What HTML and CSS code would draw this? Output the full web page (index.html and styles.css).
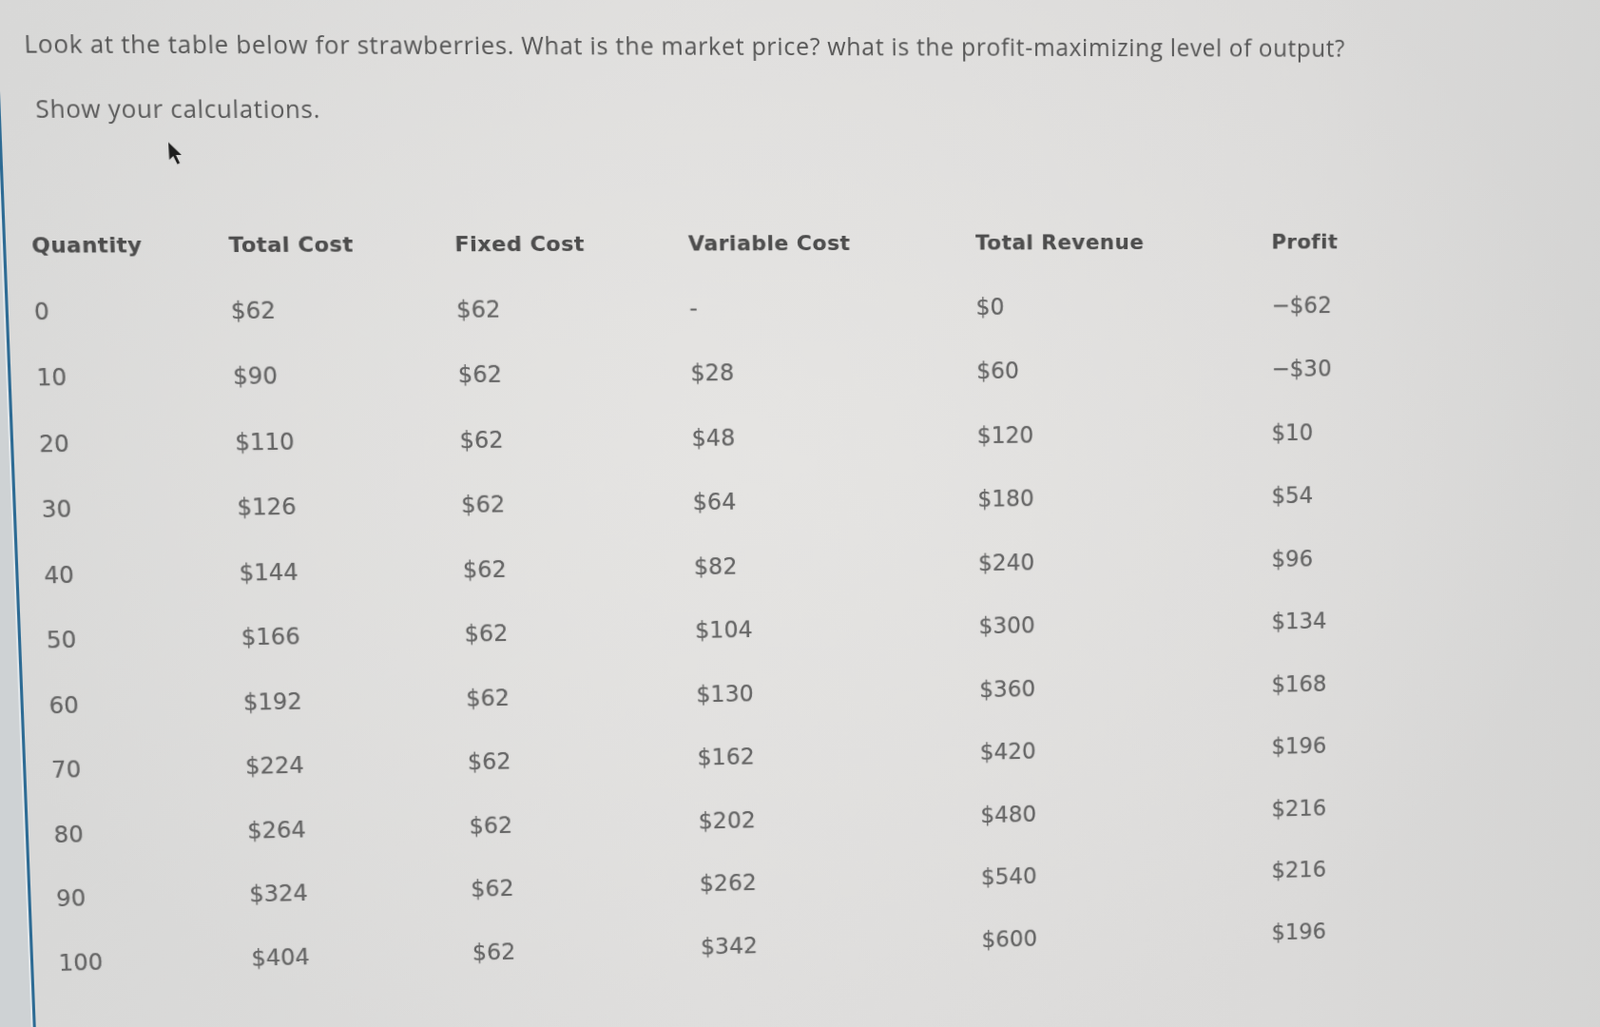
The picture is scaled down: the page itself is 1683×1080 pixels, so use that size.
FILE: index.html
```html
<!DOCTYPE html>
<html lang="en">
<head>
<meta charset="utf-8">
<title>Strawberries – market price</title>
<link rel="stylesheet" href="styles.css">
</head>
<body>
<div class="screen">
  <main class="page">
    <p class="question">Look at the table below for strawberries. What is the market price? what is the profit-maximizing level of output?</p>
    <p class="instruction">Show your calculations.</p>
    <svg class="cursor" width="15" height="26" viewBox="0 0 15 26" aria-hidden="true">
      <path d="M1 1 L1.5 19 L5.5 15 L9.5 23.5 L12 22.3 L8.2 14 L14 14 Z" fill="#1e1e1e"/>
    </svg>
    <div class="table">
      <div class="th">Quantity</div>
      <div class="th">Total Cost</div>
      <div class="th">Fixed Cost</div>
      <div class="th">Variable Cost</div>
      <div class="th">Total Revenue</div>
      <div class="th">Profit</div>

      <div class="td">0</div><div class="td">$62</div><div class="td">$62</div><div class="td">-</div><div class="td">$0</div><div class="td">−$62</div>
      <div class="td">10</div><div class="td">$90</div><div class="td">$62</div><div class="td">$28</div><div class="td">$60</div><div class="td">−$30</div>
      <div class="td">20</div><div class="td">$110</div><div class="td">$62</div><div class="td">$48</div><div class="td">$120</div><div class="td">$10</div>
      <div class="td">30</div><div class="td">$126</div><div class="td">$62</div><div class="td">$64</div><div class="td">$180</div><div class="td">$54</div>
      <div class="td">40</div><div class="td">$144</div><div class="td">$62</div><div class="td">$82</div><div class="td">$240</div><div class="td">$96</div>
      <div class="td">50</div><div class="td">$166</div><div class="td">$62</div><div class="td">$104</div><div class="td">$300</div><div class="td">$134</div>
      <div class="td">60</div><div class="td">$192</div><div class="td">$62</div><div class="td">$130</div><div class="td">$360</div><div class="td">$168</div>
      <div class="td">70</div><div class="td">$224</div><div class="td">$62</div><div class="td">$162</div><div class="td">$420</div><div class="td">$196</div>
      <div class="td">80</div><div class="td">$264</div><div class="td">$62</div><div class="td">$202</div><div class="td">$480</div><div class="td">$216</div>
      <div class="td">90</div><div class="td">$324</div><div class="td">$62</div><div class="td">$262</div><div class="td">$540</div><div class="td">$216</div>
      <div class="td">100</div><div class="td">$404</div><div class="td">$62</div><div class="td">$342</div><div class="td">$600</div><div class="td">$196</div>
    </div>
  </main>
</div>
</body>
</html>
```

FILE: styles.css
```css
html, body {
  margin: 0;
  padding: 0;
  width: 100%;
  height: 100%;
  overflow: hidden;
  background: #ced2d4;
}

.screen {
  width: 1800px;
  height: 1220px;
  overflow: hidden;
  transform-origin: 0 0;
  /* photo-of-a-screen perspective */
  transform: matrix3d(1.04105, 0.004862, 0, 0.000030706,
                      0.03939, 1.02977, 0, 0.000029412,
                      0, 0, 1, 0,
                      -14.44, -9.93, 0, 0.989216);
}

.page {
  position: relative;
  box-sizing: border-box;
  margin-left: 7px;
  width: 1793px;
  height: 1220px;
  padding: 38px 0 0 26px;
  border-left: 3px solid #2d6b94;
  box-shadow: -2px 0 0 #e2e7ea;
  background:
    radial-gradient(ellipse 900px 700px at 780px 480px, rgba(230,229,227,0.9), rgba(230,229,227,0) 100%),
    linear-gradient(90deg, #d8d8d7 0%, #dedddc 40%, #dbdad9 75%, #d3d3d2 100%);
  font-family: "Open Sans", Roboto, sans-serif;
}

.question {
  margin: 0;
  font-size: 25px;
  line-height: 30px;
  letter-spacing: 0.68px;
  color: #555;
  white-space: nowrap;
}

.instruction {
  margin: 36px 0 0 9px;
  font-size: 25px;
  line-height: 30px;
  letter-spacing: 0.68px;
  color: #595959;
}

.cursor {
  position: absolute;
  left: 167px;
  top: 153px;
  filter: blur(0.7px);
}

.table {
  display: grid;
  grid-template-columns: 200.3px 232.5px 243.8px 304.6px 320.3px 1fr;
  grid-auto-rows: 68.5px;
  align-items: center;
  margin-top: 91px;
  font-family: "DejaVu Sans", Verdana, sans-serif;
}

.th {
  font-size: 22px;
  font-weight: bold;
  letter-spacing: 0.5px;
  color: #4d4d4d;
  text-shadow: 0 0 1px rgba(60,60,60,0.3);
  white-space: nowrap;
}

.td {
  font-size: 24px;
  color: #666;
  filter: blur(0.45px);
  text-shadow: 0 0 1.2px rgba(80,80,80,0.4);
  white-space: nowrap;
}
```
